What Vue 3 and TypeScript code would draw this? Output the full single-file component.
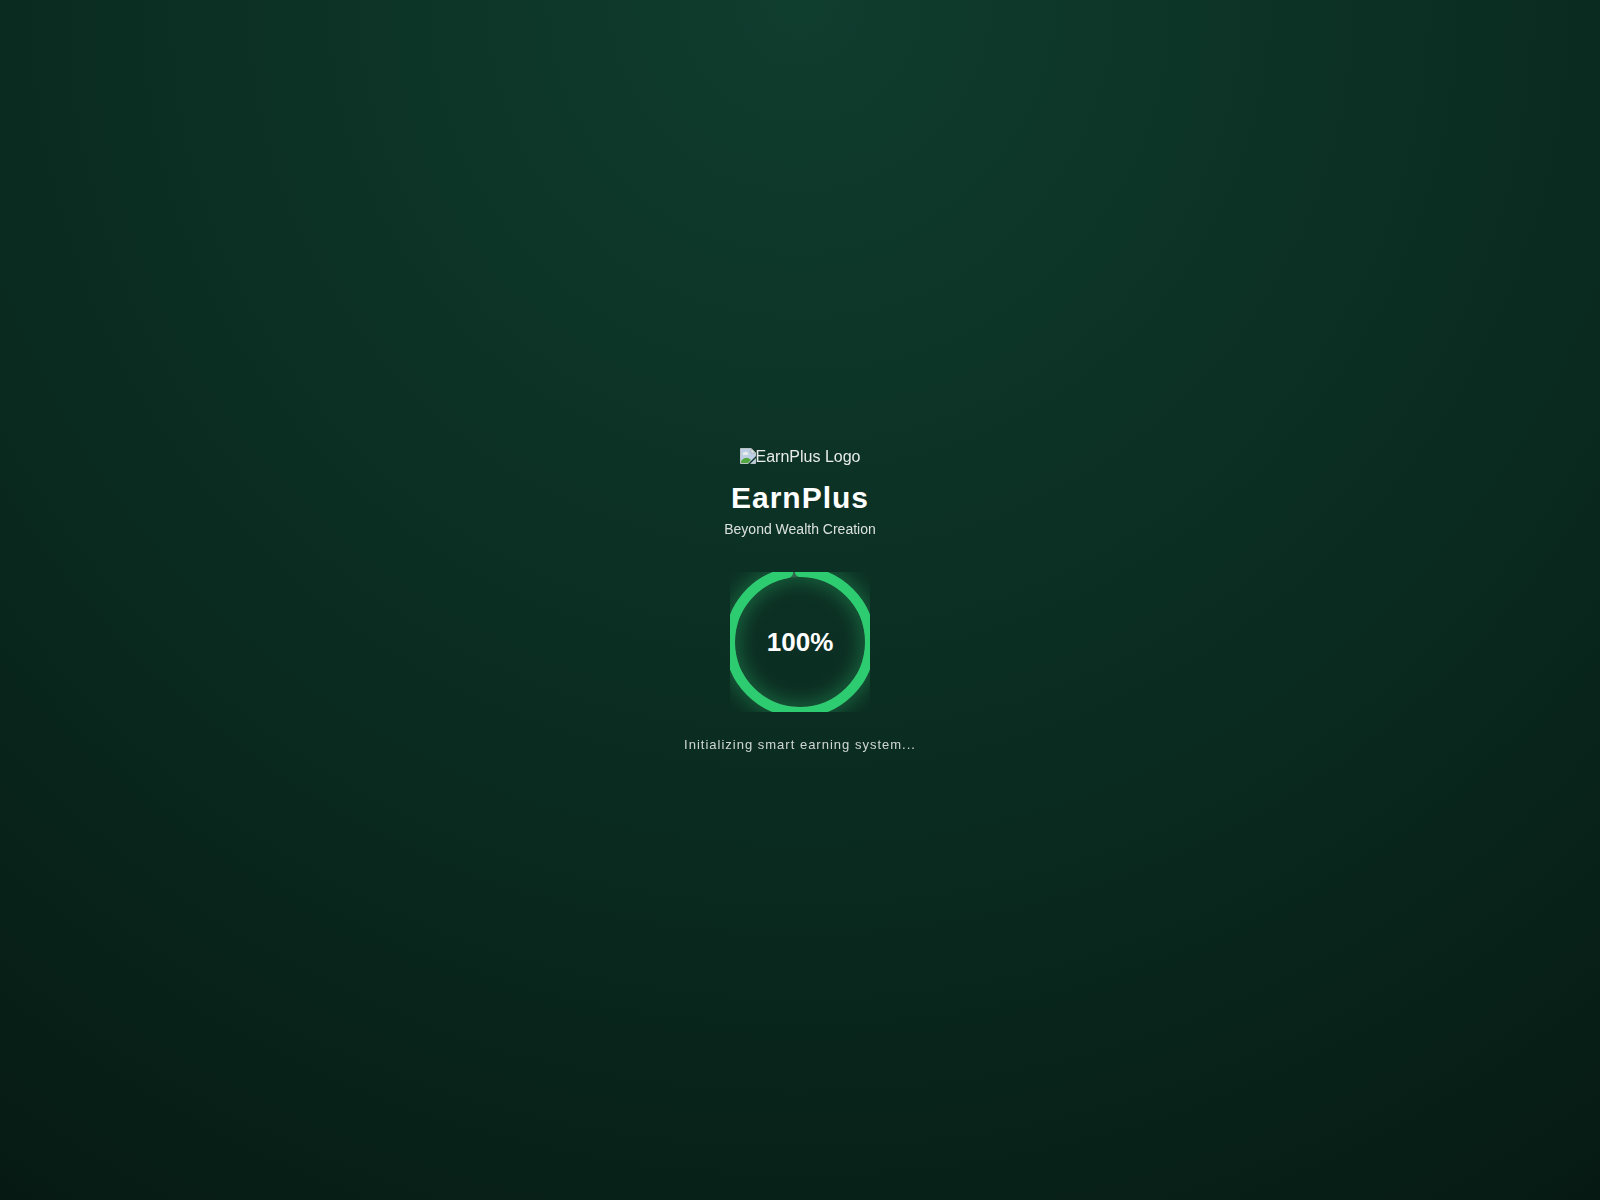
<script setup lang="ts">
const radius = 70
const dash = 440
const offset = 13
const progress = 100
</script>

<template>
  <main class="splash">
    <div class="logo">
      <svg class="logo-icon" viewBox="0 0 16 16" aria-hidden="true">
        <path d="M0.5 0.5H11L15.5 5V15.5H0.5Z" fill="#d0e0fa" stroke="#d0d3d6" />
        <path d="M3 7a2 2 0 0 1 2-3a2 2 0 0 1 3 1a1.5 1.5 0 0 1 0 2Z" fill="#fff" />
        <path d="M1 15V13Q6 7 11 12L8 15Z" fill="#5ab742" />
        <path d="M8 16L16 8V10L10 16Z" fill="#0d3327" />
        <path d="M11 0.5V5H15.5Z" fill="#fff" stroke="#c0c4c8" />
      </svg>
      <span>EarnPlus Logo</span>
    </div>
    <h1 class="title">EarnPlus</h1>
    <p class="tagline">Beyond Wealth Creation</p>
    <div class="loader">
      <svg class="ring" viewBox="0 0 140 140" aria-hidden="true">
        <circle class="track" cx="70" cy="70" :r="radius" />
        <circle class="bar" cx="70" cy="70" :r="radius" :stroke-dasharray="dash" :stroke-dashoffset="offset" />
      </svg>
      <span class="percent">{{ progress }}%</span>
    </div>
    <p class="status">Initializing smart earning system...</p>
  </main>
</template>

<style>
body {
  margin: 0;
}
</style>

<style scoped>
.splash {
  display: flex;
  flex-direction: column;
  align-items: center;
  justify-content: center;
  min-height: 100vh;
  color: #fff;
  font-family: Helvetica, "Liberation Sans", sans-serif;
  background: radial-gradient(circle at top, #0f3d2e, #0a2a1f 60%, #061a13);
}

.logo {
  display: flex;
  align-items: flex-start;
  margin-bottom: 15px;
  font-size: 16px;
  line-height: 18px;
  opacity: 0.9;
}

.logo-icon {
  width: 16px;
  height: 16px;
}

.title {
  margin: 0;
  font-size: 30px;
  line-height: 34px;
  letter-spacing: 1px;
}

.tagline {
  margin: 6px 0 0;
  font-size: 14px;
  line-height: 16px;
  opacity: 0.85;
}

.loader {
  display: grid;
  place-items: center;
  margin-top: 35px;
}

.loader > * {
  grid-area: 1 / 1;
}

.ring {
  width: 140px;
  height: 140px;
  transform: rotate(-90deg);
}

.ring circle {
  fill: none;
  stroke-width: 10;
}

.ring .track {
  stroke: rgba(255, 255, 255, 0.15);
}

.ring .bar {
  stroke: #2ecc71;
  stroke-linecap: round;
  filter: drop-shadow(0 0 10px rgba(46, 204, 113, 0.6));
}

.percent {
  z-index: 1;
  font-size: 26px;
  font-weight: bold;
  line-height: 30px;
}

.status {
  margin: 25px 0 0;
  font-size: 13px;
  line-height: 15px;
  letter-spacing: 1px;
  opacity: 0.8;
}
</style>
